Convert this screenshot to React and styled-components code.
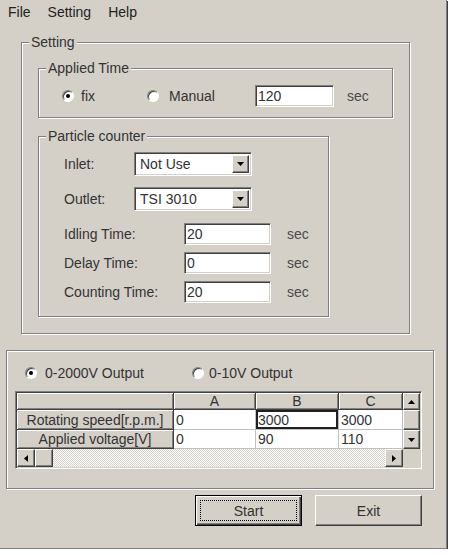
import React from "react";
import styled, { createGlobalStyle, css } from "styled-components";

const GlobalStyle = createGlobalStyle`
  html, body { margin: 0; padding: 0; background: #ffffff; }
  body { font-family: "Liberation Sans", Arial, sans-serif; font-size: 14px; color: #333; }
  * { box-sizing: border-box; }
`;

const BG = "#d4d0c8";

const raised = css`
  border: 1px solid;
  border-color: #ffffff #404040 #404040 #ffffff;
  box-shadow: inset -1px -1px 0 #808080, inset 1px 1px 0 ${BG};
`;

const sunken = css`
  border: 1px solid;
  border-color: #808080 #ffffff #ffffff #808080;
  box-shadow: inset 1px 1px 0 #404040, inset -1px -1px 0 ${BG};
`;

const Window = styled.div`
  width: 447px;
  height: 549px;
  background: ${BG};
  border-right: 1px solid #808080;
  border-bottom: 1px solid #808080;
  box-shadow: 1px 1px 0 #404040;
  display: flex;
  flex-direction: column;
`;

const MenuBar = styled.div`
  height: 24px;
  display: flex;
  align-items: center;
  gap: 17px;
  padding-left: 8px;
  color: #222;
`;

const MenuItem = styled.span`
  line-height: 16px;
`;

const Body = styled.div`
  display: flex;
  flex-direction: column;
  align-items: flex-start;
  padding: 11px 0 0 6px;
`;

const GroupBox = styled.fieldset`
  margin: ${(p) => p.$margin || "0"};
  padding: 0;
  min-width: 0;
  width: ${(p) => p.$w}px;
  border: 1px solid #808080;
  box-shadow: 1px 1px 0 #ffffff, inset 1px 1px 0 #ffffff;
`;

const Legend = styled.legend`
  margin-left: 7px;
  padding: 0 2px;
  line-height: 15px;
  background: ${BG};
`;

const Inner = styled.div`
  padding: ${(p) => p.$pad};
  display: flex;
  flex-direction: column;
`;

const Row = styled.div`
  display: flex;
  align-items: center;
  height: ${(p) => p.$h || 22}px;
  margin-top: ${(p) => p.$mt || 0}px;
  padding-left: ${(p) => p.$pl || 0}px;
`;

const RadioOption = styled.label`
  display: inline-flex;
  align-items: center;
  gap: ${(p) => p.$gap || 7}px;
  width: ${(p) => (p.$w ? `${p.$w}px` : "auto")};
  line-height: 16px;
`;

const RadioCircle = styled.span`
  position: relative;
  width: 12px;
  height: 12px;
  border-radius: 50%;
  background: #ffffff;
  border: 1px solid;
  border-color: #808080 #ffffff #ffffff #808080;
  box-shadow: inset 1px 1px 0 #404040;
  flex: none;
  ${(p) =>
    p.$checked &&
    css`
      &::after {
        content: "";
        position: absolute;
        left: 3px;
        top: 3px;
        width: 4px;
        height: 4px;
        border-radius: 50%;
        background: #000;
      }
    `}
`;

const TextBox = styled.div`
  width: ${(p) => p.$w}px;
  height: ${(p) => p.$h || 22}px;
  ${sunken};
  background: #ffffff;
  padding-left: 2px;
  display: flex;
  align-items: center;
  line-height: 16px;
`;

const Unit = styled.span`
  margin-left: ${(p) => p.$ml}px;
  color: #4a4a4a;
`;

const FieldLabel = styled.span`
  width: ${(p) => p.$w}px;
  flex: none;
`;

const Combo = styled.div`
  width: 118px;
  height: 24px;
  ${sunken};
  background: #ffffff;
  display: flex;
  align-items: stretch;
  padding: 2px;
`;

const ComboText = styled.span`
  flex: 1;
  padding-left: 3px;
  display: flex;
  align-items: center;
`;

const ArrowButton = styled.span`
  width: ${(p) => p.$w || 17}px;
  height: ${(p) => (p.$h ? `${p.$h}px` : "auto")};
  background: ${BG};
  ${raised};
  display: flex;
  align-items: center;
  justify-content: center;
  flex: none;
`;

const Arrow = ({ dir }) => {
  const pts = {
    down: "0,0 7,0 3.5,4",
    up: "0,4 7,4 3.5,0",
    left: "4,0 4,7 0,3.5",
    right: "0,0 0,7 4,3.5",
  }[dir];
  const vertical = dir === "up" || dir === "down";
  return (
    <svg width={vertical ? 7 : 4} height={vertical ? 4 : 7} viewBox={vertical ? "0 0 7 4" : "0 0 4 7"}>
      <polygon points={pts} fill="#000" />
    </svg>
  );
};

const Panel = styled.div`
  margin-top: 16px;
  width: 428px;
  border: 1px solid #808080;
  box-shadow: 1px 1px 0 #ffffff, inset 1px 1px 0 #ffffff;
  padding: 14px 0 19px 8px;
  display: flex;
  flex-direction: column;
`;

const GridFrame = styled.div`
  margin-top: 10px;
  width: 407px;
  border: 1px solid;
  border-color: #808080 #ffffff #ffffff #808080;
  box-shadow: inset 1px 1px 0 #404040, inset -1px -1px 0 ${BG};
  padding: 1px;
  display: grid;
  grid-template-columns: 1fr 17px;
  grid-template-rows: 56px 18px;
`;

const Table = styled.div`
  display: grid;
  grid-template-columns: 157px 82px 83px 1fr;
  grid-template-rows: 17px 20px 19px;
  overflow: hidden;
  background: #ffffff;
`;

const HeadCell = styled.div`
  background: ${BG};
  border-right: 1px solid #404040;
  border-bottom: 1px solid #404040;
  box-shadow: inset 1px 1px 0 #ffffff, inset -1px -1px 0 #808080;
  display: flex;
  align-items: center;
  justify-content: center;
  line-height: 16px;
  white-space: nowrap;
  overflow: hidden;
`;

const DataCell = styled.div`
  background: #ffffff;
  border-right: 1px solid #c0c0c0;
  border-bottom: 1px solid #c0c0c0;
  display: flex;
  align-items: center;
  padding-left: 2px;
  line-height: 16px;
  white-space: nowrap;
  overflow: hidden;
  ${(p) =>
    p.$selected &&
    css`
      box-shadow: inset 0 0 0 2px #202020;
    `}
`;

const VScroll = styled.div`
  display: flex;
  flex-direction: column;
`;

const Thumb = styled.div`
  background: ${BG};
  ${raised};
  ${(p) => (p.$w ? `width: ${p.$w}px;` : "")}
  ${(p) => (p.$grow ? "flex: 1;" : "")}
`;

const HScroll = styled.div`
  display: flex;
`;

const Track = styled.div`
  flex: 1;
  background: conic-gradient(#ffffff 25%, ${BG} 0 50%, #ffffff 0 75%, ${BG} 0) 0 0 / 2px 2px;
`;

const Corner = styled.div`
  background: ${BG};
`;

const ButtonRow = styled.div`
  margin-top: 6px;
  width: 428px;
  display: flex;
  justify-content: flex-end;
  gap: 13px;
  padding-right: 12px;
`;

const Button = styled.button`
  width: 107px;
  height: 31px;
  font: inherit;
  color: #333;
  background: ${BG};
  padding: 0;
  position: relative;
  ${(p) =>
    p.$default
      ? css`
          border: 1px solid #000;
          box-shadow: inset 1px 1px 0 #ffffff, inset -1px -1px 0 #404040, inset -2px -2px 0 #808080;
          &::after {
            content: "";
            position: absolute;
            inset: 4px;
            border: 1px dotted #000;
          }
        `
      : css`
          ${raised};
        `}
`;

export default function App() {
  return (
    <>
      <GlobalStyle />
      <Window>
        <MenuBar>
          <MenuItem>File</MenuItem>
          <MenuItem>Setting</MenuItem>
          <MenuItem>Help</MenuItem>
        </MenuBar>
        <Body>
          <GroupBox $w={389} $margin="0 0 0 15px">
            <Legend>Setting</Legend>
            <Inner $pad="11px 16px 16px 16px">
              <GroupBox $w={355}>
                <Legend>Applied Time</Legend>
                <Inner $pad="9px 0 10px 23px">
                  <Row $h={22}>
                    <RadioOption $w={85}>
                      <RadioCircle $checked />
                      fix
                    </RadioOption>
                    <RadioOption $w={108} $gap={10}>
                      <RadioCircle />
                      Manual
                    </RadioOption>
                    <TextBox $w={79}>120</TextBox>
                    <Unit $ml={13}>sec</Unit>
                  </Row>
                </Inner>
              </GroupBox>
              <GroupBox $w={291} $margin="11px 0 0 0">
                <Legend>Particle counter</Legend>
                <Inner $pad="8px 0 13px 25px">
                  <Row $h={24}>
                    <FieldLabel $w={70}>Inlet:</FieldLabel>
                    <Combo>
                      <ComboText>Not Use</ComboText>
                      <ArrowButton>
                        <Arrow dir="down" />
                      </ArrowButton>
                    </Combo>
                  </Row>
                  <Row $h={24} $mt={11}>
                    <FieldLabel $w={70}>Outlet:</FieldLabel>
                    <Combo>
                      <ComboText>TSI 3010</ComboText>
                      <ArrowButton>
                        <Arrow dir="down" />
                      </ArrowButton>
                    </Combo>
                  </Row>
                  <Row $h={22} $mt={12}>
                    <FieldLabel $w={120}>Idling Time:</FieldLabel>
                    <TextBox $w={87}>20</TextBox>
                    <Unit $ml={16}>sec</Unit>
                  </Row>
                  <Row $h={22} $mt={7}>
                    <FieldLabel $w={120}>Delay Time:</FieldLabel>
                    <TextBox $w={87}>0</TextBox>
                    <Unit $ml={16}>sec</Unit>
                  </Row>
                  <Row $h={22} $mt={7}>
                    <FieldLabel $w={120}>Counting Time:</FieldLabel>
                    <TextBox $w={87}>20</TextBox>
                    <Unit $ml={16}>sec</Unit>
                  </Row>
                </Inner>
              </GroupBox>
            </Inner>
          </GroupBox>

          <Panel>
            <Row $h={16} $pl={10}>
              <RadioOption $w={167} $gap={8}>
                <RadioCircle $checked />
                0-2000V Output
              </RadioOption>
              <RadioOption $gap={5}>
                <RadioCircle />
                0-10V Output
              </RadioOption>
            </Row>
            <GridFrame>
              <Table>
                <HeadCell />
                <HeadCell>A</HeadCell>
                <HeadCell>B</HeadCell>
                <HeadCell>C</HeadCell>
                <HeadCell>Rotating speed[r.p.m.]</HeadCell>
                <DataCell>0</DataCell>
                <DataCell $selected>3000</DataCell>
                <DataCell>3000</DataCell>
                <HeadCell>Applied voltage[V]</HeadCell>
                <DataCell>0</DataCell>
                <DataCell>90</DataCell>
                <DataCell>110</DataCell>
              </Table>
              <VScroll>
                <ArrowButton $h={17}>
                  <Arrow dir="up" />
                </ArrowButton>
                <Thumb $grow />
                <ArrowButton $h={19}>
                  <Arrow dir="down" />
                </ArrowButton>
              </VScroll>
              <HScroll>
                <ArrowButton $w={18}>
                  <Arrow dir="left" />
                </ArrowButton>
                <Thumb $w={18} />
                <Track />
                <ArrowButton $w={18}>
                  <Arrow dir="right" />
                </ArrowButton>
              </HScroll>
              <Corner />
            </GridFrame>
          </Panel>

          <ButtonRow>
            <Button $default>Start</Button>
            <Button>Exit</Button>
          </ButtonRow>
        </Body>
      </Window>
    </>
  );
}
